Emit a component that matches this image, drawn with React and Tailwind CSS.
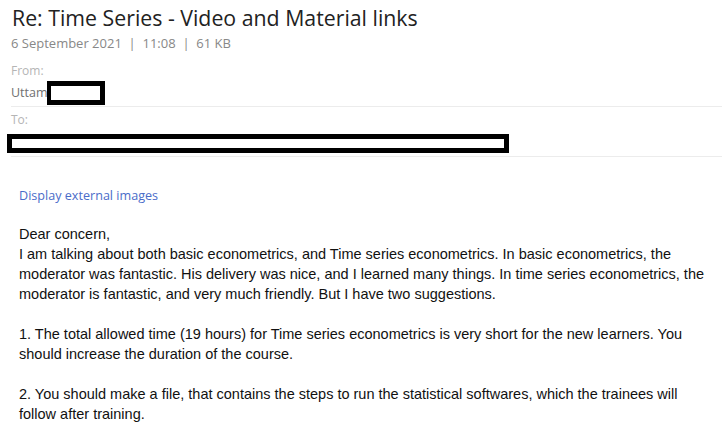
// MailView: single message view with header meta and plain body
import React from 'react';

const head = { fontFamily: '"Open Sans", "DejaVu Sans", sans-serif' };
const body = { fontFamily: '"Liberation Sans", Arial, sans-serif' };

function MailHeader() {
  return (
    <div style={head}>
      <h1 className="pl-3 pt-[3px] text-[21.3px] leading-[30px] text-[#222] font-normal">
        Re: Time Series - Video and Material links
      </h1>
      <div className="pl-[11px] text-[13px] leading-[20px] text-[#888]">
        6 September 2021 &nbsp;|&nbsp; 11:08 &nbsp;|&nbsp; 61 KB
      </div>

      <div className="pl-[11px] mt-2">
        {/* From */}
        <div className="text-[12px] leading-[20px] text-[#b5b5b5]">From:</div>
        <div className="flex items-center h-[26px] pb-px border-b border-[#ececec] text-[12.5px] text-[#707070]">
          <span>Uttam</span>
          <span className="-ml-px block w-[58px] h-[24px] border-[5px] border-l-4 border-black bg-white" />
        </div>

        {/* To */}
        <div className="mt-[3px] text-[12px] leading-[20px] text-[#b5b5b5]">To:</div>
        <div className="pt-1 pb-[3px] border-b border-[#ececec]">
          <div className="-ml-1 w-[502px] h-[19px] border-[5px] border-black bg-white" />
        </div>
      </div>
    </div>
  );
}

function MailBody() {
  return (
    <div className="pl-[19px] pr-[10px]" style={body}>
      <div className="mt-[29px] text-[12.6px] leading-[20px] text-[#4a6cc9]" style={head}>
        Display external images
      </div>
      <div className="mt-[18px] text-[14.5px] leading-[20px] text-[#111]">
        Dear concern,
        <br />
        I am talking about both basic econometrics, and Time series econometrics. In basic econometrics, the moderator was fantastic. His delivery was nice, and I learned many things. In time series econometrics, the moderator is fantastic, and very much friendly. But I have two suggestions.
        <br />
        <br />
        1. The total allowed time (19 hours) for Time series econometrics is very short for the new learners. You should increase the duration of the course.
        <br />
        <br />
        2. You should make a file, that contains the steps to run the statistical softwares, which the trainees will follow after training.
      </div>
    </div>
  );
}

export default function App() {
  return (
    <div className="w-[722px] h-[440px] overflow-hidden bg-white">
      <MailHeader />
      <MailBody />
    </div>
  );
}
